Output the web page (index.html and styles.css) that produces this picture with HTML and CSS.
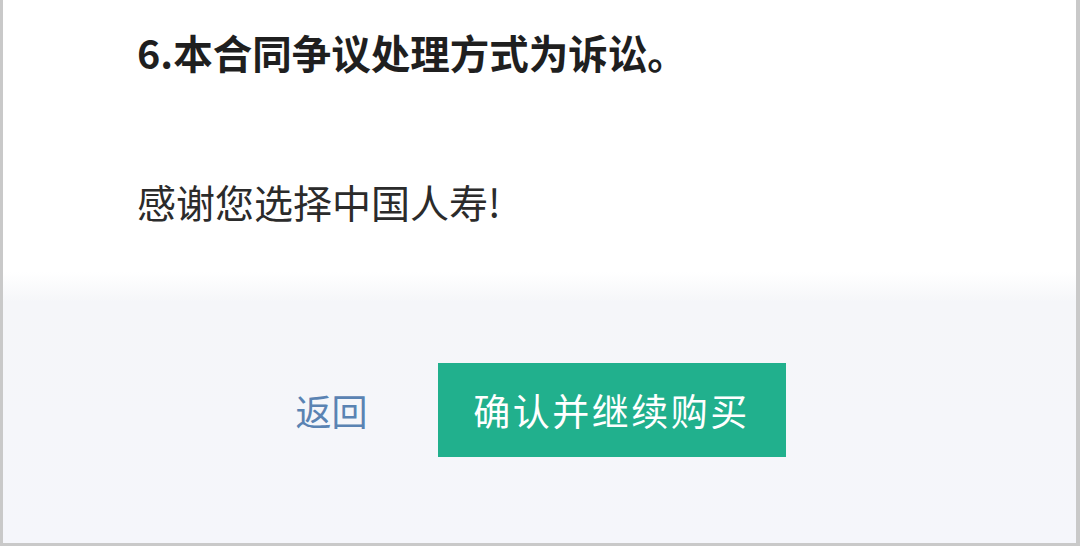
FILE: index.html
```html
<!DOCTYPE html>
<html lang="zh-CN">
<head>
<meta charset="utf-8">
<link rel="stylesheet" href="styles.css">
</head>
<body>
<div class="frame">
  <div class="content">
    <p class="clause">6.本合同争议处理方式为诉讼。</p>
    <p class="thanks">感谢您选择中国人寿!</p>
  </div>
  <div class="footer">
    <a class="back">返回</a>
    <button class="confirm">确认并继续购买</button>
  </div>
</div>
</body>
</html>
```
FILE: styles.css
```css
html, body {
  margin: 0;
  padding: 0;
  background: #ffffff;
}
body {
  width: 1080px;
  height: 546px;
  overflow: hidden;
  font-family: "Noto Sans CJK SC", "Noto Sans", sans-serif;
}
.frame {
  box-sizing: border-box;
  width: 1080px;
  height: 546px;
  border-left: 3px solid #c9c9c9;
  border-right: 4px solid #c9c9c9;
  border-bottom: 3px solid #c9c9c9;
  display: flex;
  flex-direction: column;
}
.content {
  padding-left: 134px;
  height: 272px;
  background: #ffffff;
}
.clause {
  margin: 0;
  padding-top: 24px;
  font-size: 39.5px;
  line-height: 56px;
  font-weight: 700;
  color: #1f1f1f;
}
.thanks {
  margin: 0;
  padding-top: 93px;
  font-size: 39px;
  line-height: 56px;
  font-weight: 400;
  color: #2b2b2b;
}
.footer {
  flex: 1;
  background: linear-gradient(to bottom, #ffffff 0px, #f5f6f9 30px, #f5f6fb 100%);
  display: flex;
  justify-content: center;
  align-items: flex-start;
  padding-top: 91px;
  padding-left: 2px;
  gap: 70px;
}
.back {
  font-size: 36px;
  line-height: 94px;
  color: #5a83b3;
  cursor: pointer;
}
.confirm {
  width: 348px;
  height: 94px;
  border: none;
  border-radius: 0;
  background: #21b08d;
  color: #ffffff;
  font-family: "Noto Sans CJK SC", "Noto Sans", sans-serif;
  font-size: 37px;
  letter-spacing: 2.5px;
  padding: 0;
}
```
